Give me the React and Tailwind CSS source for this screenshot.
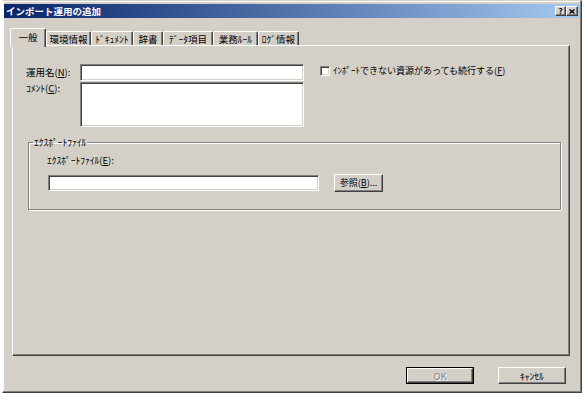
import React from "react";

const font = { fontFamily: '"Noto Sans CJK JP", "Noto Sans", sans-serif' };

const sunken =
  "bg-white border border-t-[#808080] border-l-[#808080] border-r-white border-b-white shadow-[inset_1px_1px_0_#404040,inset_-1px_-1px_0_#d4d0c8]";
const raised =
  "bg-[#d4d0c8] border border-t-white border-l-white border-r-[#404040] border-b-[#404040] shadow-[inset_-1px_-1px_0_#808080]";

const tabs = [
  { label: "一般", w: "w-[36px]", active: true },
  { label: "環境情報", w: "w-[45px]" },
  { label: "ﾄﾞｷｭﾒﾝﾄ", w: "w-[42px]" },
  { label: "辞書", w: "w-[30px]" },
  { label: "ﾃﾞｰﾀ項目", w: "w-[50px]" },
  { label: "業務ﾙｰﾙ", w: "w-[45px]" },
  { label: "ﾛｸﾞ情報", w: "w-[41px]" },
];

const Tab = ({ label, w, active }) => (
  <div
    className={`${w} flex items-center justify-center rounded-t-[2px] bg-[#d4d0c8] border-t border-l border-r border-t-white border-l-white border-r-[#404040] shadow-[inset_-1px_0_0_#808080] ${
      active ? "h-[19px] -ml-[2px] -mb-[2px] relative z-10 pb-[2px]" : "h-[14px]"
    }`}
  >
    <span className="text-[9.5px] leading-[12px] text-black whitespace-nowrap">{label}</span>
  </div>
);

const U = ({ children }) => <span className="underline underline-offset-1">{children}</span>;

export default function App() {
  return (
    <div className="w-[585px] h-[397px] bg-white pl-[2px] overflow-hidden" style={font}>
      <div className="w-[580px] h-[393px] bg-[#d4d0c8] border border-t-[#d4d0c8] border-l-white border-r-[#404040] border-b-[#404040] shadow-[inset_-1px_-1px_0_#808080,inset_1px_1px_0_#ffffff] pt-[3px] px-[1px] flex flex-col">
        {/* Title bar */}
        <div className="h-[14px] flex items-center justify-between bg-gradient-to-r from-[#0a246a] to-[#a6caf0] pl-[2px] pr-[2px]">
          <span className="text-[9.5px] leading-[12px] font-bold text-white whitespace-nowrap">
            インポート運用の追加
          </span>
          <div className="flex">
            <div className={`${raised} w-[11px] h-[10px] flex items-center justify-center`}>
              <span className="text-[8px] leading-[8px] font-bold text-black">?</span>
            </div>
            <div className={`${raised} w-[12px] h-[10px] flex items-center justify-center`}>
              <svg width="6" height="5" viewBox="0 0 6 5">
                <path d="M0.5 0.5 L5.5 4.5 M5.5 0.5 L0.5 4.5" stroke="#000" strokeWidth="1.4" />
              </svg>
            </div>
          </div>
        </div>

        {/* Tabs */}
        <div className="mt-[10px] ml-[8px] flex items-end">
          {tabs.map((t) => (
            <Tab key={t.label} {...t} />
          ))}
        </div>

        {/* Panel */}
        <div className="ml-[8px] w-[558px] h-[311px] border border-t-white border-l-white border-r-[#404040] border-b-[#404040] shadow-[inset_-1px_-1px_0_#808080] pt-[18px] pl-[13px]">
          <div className="flex items-start">
            <div className="w-[54px] flex flex-col text-[9.5px] leading-[12px] text-black">
              <div className="h-[17px] flex items-center pb-[2px] whitespace-nowrap">
                運用名(<U>N</U>):
              </div>
              <div className="mt-[1px] whitespace-nowrap">
                ｺﾒﾝﾄ(<U>C</U>):
              </div>
            </div>
            <div className="flex flex-col">
              <div className={`${sunken} w-[224px] h-[17px]`} />
              <div className={`${sunken} w-[224px] h-[45px] mt-[1px]`} />
            </div>
            <div className="ml-[16px] mt-[1px] flex items-center gap-[3px]">
              <div className={`${sunken} w-[10px] h-[10px]`} />
              <span className="text-[9px] leading-[12px] text-black whitespace-nowrap">
                ｲﾝﾎﾟｰﾄできない資源があっても続行する(<U>F</U>)
              </span>
            </div>
          </div>

          <fieldset className="mt-[9px] ml-[2px] w-[533px] border border-[#808080] shadow-[inset_1px_1px_0_#ffffff,1px_1px_0_#ffffff] pb-[17px]">
            <legend className="ml-[4px] px-[1px] text-[9.5px] leading-[12px] text-black">
              ｴｸｽﾎﾟｰﾄﾌｧｲﾙ
            </legend>
            <div className="pl-[18px] mt-[6px] text-[9.5px] leading-[12px] text-black">
              ｴｸｽﾎﾟｰﾄﾌｧｲﾙ(<U>E</U>):
            </div>
            <div className="pl-[19px] mt-[8px] flex items-center">
              <div className={`${sunken} w-[271px] h-[16px]`} />
              <button
                className={`${raised} ml-[15px] w-[49px] h-[18px] flex items-center justify-center text-[9px] leading-[12px] text-black`}
              >
                参照(<U>B</U>)...
              </button>
            </div>
          </fieldset>
        </div>

        {/* Bottom buttons */}
        <div className="mt-[11px] flex justify-end gap-[24px] mr-[14px]">
          <div className="w-[68px] h-[17px] border border-black">
            <div className={`${raised} w-full h-full flex items-center justify-center`}>
              <span className="text-[9.5px] leading-[12px] text-[#808080] [text-shadow:1px_1px_0_#ffffff]">
                OK
              </span>
            </div>
          </div>
          <button
            className={`${raised} w-[68px] h-[17px] flex items-center justify-center text-[9.5px] leading-[12px] text-black`}
          >
            ｷｬﾝｾﾙ
          </button>
        </div>
      </div>
    </div>
  );
}
